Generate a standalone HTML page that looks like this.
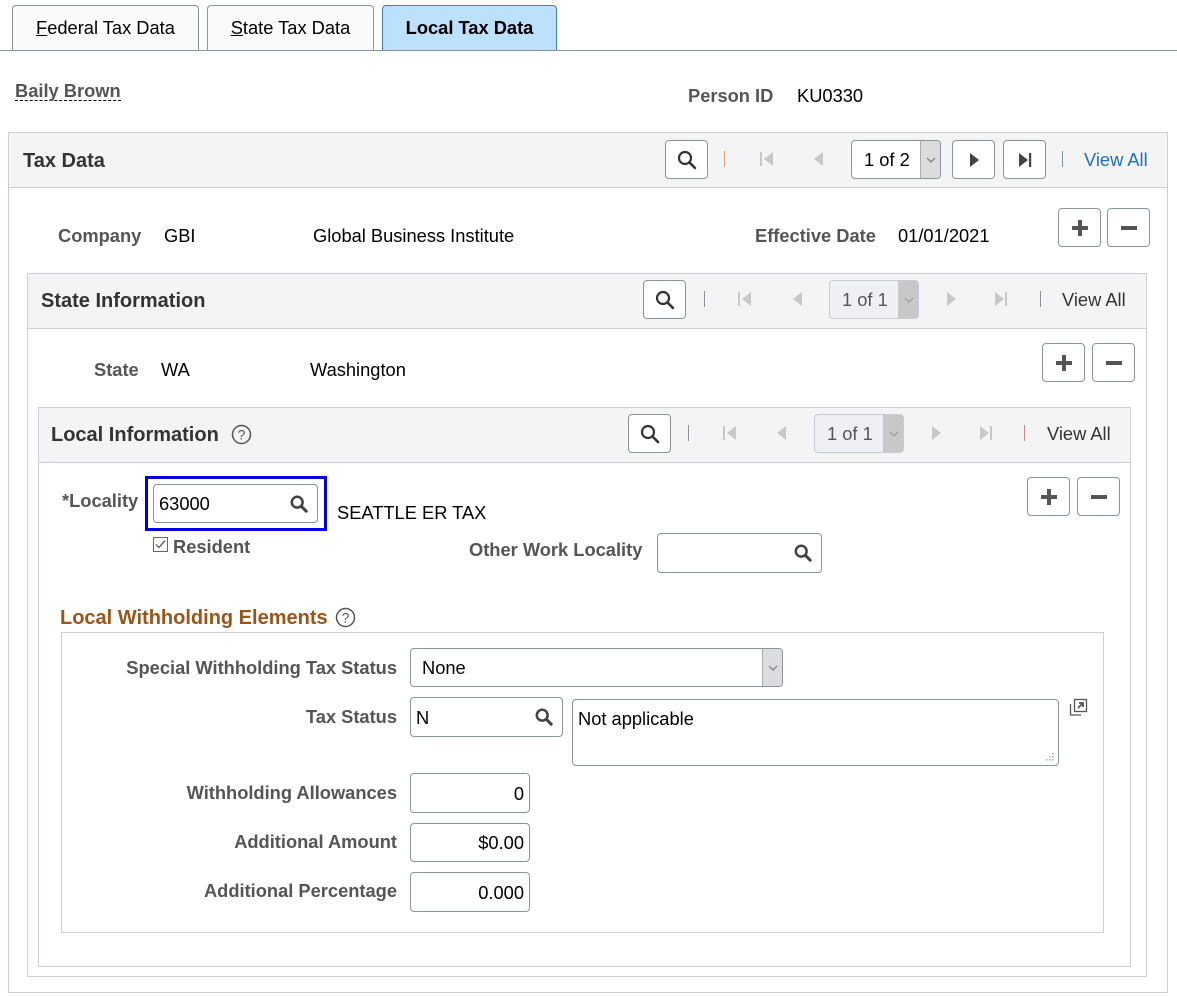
<!DOCTYPE html>
<html><head><meta charset="utf-8">
<style>
*{box-sizing:border-box;margin:0;padding:0}
body{width:1177px;height:997px;background:#fff;font-family:"Liberation Sans",Arial,sans-serif;font-size:18.3px;color:#000;position:relative;overflow:hidden}
.a{position:absolute}
.t{position:absolute;line-height:20px;white-space:nowrap}
.lb{position:absolute;line-height:20px;white-space:nowrap;font-weight:bold;color:#555}
.rl{text-align:right}
.tab{position:absolute;top:5px;height:46px;border:1px solid #8d9499;border-bottom:none;border-radius:4px 4px 0 0;background:#fafafa;text-align:center;line-height:44px;font-size:18.3px;color:#000}
.box{position:absolute;border:1px solid #ccd0d6;background:#fff}
.hdr{position:absolute;left:0;right:0;top:0;height:55px;background:#f4f4f4;border-bottom:1px solid #ccd0d6}
.ht{font-weight:bold;font-size:20px;color:#333}
.btn{position:absolute;width:43px;height:39px;border:1px solid #8d9499;border-radius:4px;background:#fff}
.btn svg{position:absolute;left:50%;top:50%;transform:translate(-50%,-50%)}
.sel{position:absolute;height:39px;border:1px solid #8d9499;border-radius:4px;background:#fff;overflow:hidden}
.sel .dd{position:absolute;right:0;top:0;bottom:0;width:20px;background:#dcdcdc;border-left:1px solid #aaa}
.sel.dis{background:#eef0f4;border-color:#c8ccd2;color:#555}
.sel.dis .dd{background:#c8c8c8;border-left-color:#c8c8c8}
.inp{position:absolute;border:1px solid #8d9499;border-radius:4px;background:#fff}
.pipe{position:absolute;width:1px;height:16px;background:#8d9499}
</style></head><body>

<div class="tab" style="left:12px;width:187px"><u>F</u>ederal Tax Data</div>
<div class="tab" style="left:207px;width:167px"><u>S</u>tate Tax Data</div>
<div class="tab" style="left:382px;width:175px;background:#bde0fb;border-color:#3b7fc4;font-weight:bold">Local Tax Data</div>
<div class="a" style="left:0;top:50px;width:1177px;height:1px;background:#8d9499"></div>

<div class="lb" style="left:15px;top:81px;border-bottom:1px dashed #000;line-height:19px">Baily Brown</div>
<div class="lb" style="left:688px;top:86px">Person ID</div>
<div class="t" style="left:797px;top:86px">KU0330</div>

<div class="box" style="left:8px;top:132px;width:1160px;height:861px">
  <div class="hdr"><div class="t ht" style="left:14px;top:18px">Tax Data</div></div>
</div>
<div class="btn" style="left:665px;top:140px"><svg width="20" height="20" viewBox="0 0 20 20"><circle cx="8" cy="8" r="6" fill="none" stroke="#333" stroke-width="2.2"/><path d="M12.5 12.5L18 18" stroke="#333" stroke-width="2.6" stroke-linecap="round"/></svg></div>
<div class="pipe" style="left:724px;top:151px;background:#d9a07a"></div>
<svg class="a" style="left:760px;top:151px" width="14" height="16"><rect x="0" y="1" width="2" height="14" fill="#c8c8c8"/><path d="M13 1L4 8L13 15Z" fill="#c8c8c8"/></svg>
<svg class="a" style="left:813px;top:151px" width="10" height="16"><path d="M10 1L1 8L10 15Z" fill="#c8c8c8"/></svg>
<div class="sel" style="left:851px;top:140px;width:90px"><div class="t" style="left:12px;top:9px">1 of 2</div><div class="dd"><svg class="a" style="left:5px;top:16px" width="10" height="6"><path d="M1 1L5 5L9 1" fill="none" stroke="#777" stroke-width="1.2"/></svg></div></div>
<div class="btn" style="left:952px;top:140px"><svg width="12" height="16"><path d="M2 1L11 8L2 15Z" fill="#444"/></svg></div>
<div class="btn" style="left:1003px;top:140px"><svg width="14" height="16"><path d="M1 1L10 8L1 15Z" fill="#444"/><rect x="11" y="1" width="2.2" height="14" fill="#444"/></svg></div>
<div class="pipe" style="left:1062px;top:151px"></div>
<div class="t" style="left:1084px;top:150px;color:#1b6dc9">View All</div>

<div class="lb" style="left:58px;top:226px">Company</div>
<div class="t" style="left:164px;top:226px">GBI</div>
<div class="t" style="left:313px;top:226px">Global Business Institute</div>
<div class="lb" style="left:755px;top:226px">Effective Date</div>
<div class="t" style="left:898px;top:226px">01/01/2021</div>
<div class="btn" style="left:1058px;top:208px"><svg width="20" height="20"><path d="M10 2V18M2 10H18" stroke="#555" stroke-width="4"/></svg></div>
<div class="btn" style="left:1107px;top:208px"><svg width="20" height="20"><path d="M2 10H18" stroke="#555" stroke-width="4"/></svg></div>

<div class="box" style="left:27px;top:273px;width:1120px;height:704px">
  <div class="hdr"><div class="t ht" style="left:13px;top:17px">State Information</div></div>
</div>
<div class="btn" style="left:643px;top:280px"><svg width="20" height="20" viewBox="0 0 20 20"><circle cx="8" cy="8" r="6" fill="none" stroke="#333" stroke-width="2.2"/><path d="M12.5 12.5L18 18" stroke="#333" stroke-width="2.6" stroke-linecap="round"/></svg></div>
<div class="pipe" style="left:704px;top:291px"></div>
<svg class="a" style="left:738px;top:291px" width="14" height="16"><rect x="0" y="1" width="2" height="14" fill="#c8c8c8"/><path d="M13 1L4 8L13 15Z" fill="#c8c8c8"/></svg>
<svg class="a" style="left:792px;top:291px" width="10" height="16"><path d="M10 1L1 8L10 15Z" fill="#c8c8c8"/></svg>
<div class="sel dis" style="left:829px;top:280px;width:90px"><div class="t" style="left:12px;top:9px">1 of 1</div><div class="dd"><svg class="a" style="left:5px;top:16px" width="10" height="6"><path d="M1 1L5 5L9 1" fill="none" stroke="#999" stroke-width="1.2"/></svg></div></div>
<svg class="a" style="left:946px;top:291px" width="10" height="16"><path d="M1 1L10 8L1 15Z" fill="#c8c8c8"/></svg>
<svg class="a" style="left:994px;top:291px" width="14" height="16"><path d="M1 1L10 8L1 15Z" fill="#c8c8c8"/><rect x="11" y="1" width="2" height="14" fill="#c8c8c8"/></svg>
<div class="pipe" style="left:1040px;top:291px"></div>
<div class="t" style="left:1062px;top:290px;color:#333">View All</div>

<div class="lb" style="left:94px;top:360px">State</div>
<div class="t" style="left:161px;top:360px">WA</div>
<div class="t" style="left:310px;top:360px">Washington</div>
<div class="btn" style="left:1042px;top:343px"><svg width="20" height="20"><path d="M10 2V18M2 10H18" stroke="#555" stroke-width="4"/></svg></div>
<div class="btn" style="left:1092px;top:343px"><svg width="20" height="20"><path d="M2 10H18" stroke="#555" stroke-width="4"/></svg></div>

<div class="box" style="left:38px;top:407px;width:1093px;height:560px">
  <div class="hdr"><div class="t ht" style="left:12px;top:17px">Local Information</div></div>
</div>
<svg class="a" style="left:231px;top:424px" width="21" height="21"><circle cx="10.5" cy="10.5" r="9" fill="none" stroke="#555" stroke-width="1.5"/><text x="10.5" y="15.5" text-anchor="middle" font-family="Liberation Sans" font-size="14" fill="#555">?</text></svg>
<div class="btn" style="left:628px;top:414px"><svg width="20" height="20" viewBox="0 0 20 20"><circle cx="8" cy="8" r="6" fill="none" stroke="#333" stroke-width="2.2"/><path d="M12.5 12.5L18 18" stroke="#333" stroke-width="2.6" stroke-linecap="round"/></svg></div>
<div class="pipe" style="left:688px;top:425px"></div>
<svg class="a" style="left:723px;top:425px" width="14" height="16"><rect x="0" y="1" width="2" height="14" fill="#c8c8c8"/><path d="M13 1L4 8L13 15Z" fill="#c8c8c8"/></svg>
<svg class="a" style="left:776px;top:425px" width="10" height="16"><path d="M10 1L1 8L10 15Z" fill="#c8c8c8"/></svg>
<div class="sel dis" style="left:814px;top:414px;width:90px"><div class="t" style="left:12px;top:9px">1 of 1</div><div class="dd"><svg class="a" style="left:5px;top:16px" width="10" height="6"><path d="M1 1L5 5L9 1" fill="none" stroke="#999" stroke-width="1.2"/></svg></div></div>
<svg class="a" style="left:931px;top:425px" width="10" height="16"><path d="M1 1L10 8L1 15Z" fill="#c8c8c8"/></svg>
<svg class="a" style="left:979px;top:425px" width="14" height="16"><path d="M1 1L10 8L1 15Z" fill="#c8c8c8"/><rect x="11" y="1" width="2" height="14" fill="#c8c8c8"/></svg>
<div class="pipe" style="left:1024px;top:425px;background:#c9868a"></div>
<div class="t" style="left:1047px;top:424px;color:#333">View All</div>

<div class="lb" style="left:62px;top:491px">*Locality</div>
<div class="a" style="left:145px;top:476px;width:182px;height:55px;border:3px solid #0000e6"></div>
<div class="inp" style="left:153px;top:484px;width:165px;height:39px"><div class="t" style="left:5px;top:9px">63000</div><svg class="a" style="left:136px;top:10px" width="18" height="18" viewBox="0 0 20 20"><circle cx="8" cy="8" r="6" fill="none" stroke="#444" stroke-width="2.8"/><path d="M12.5 12.5L18 18" stroke="#444" stroke-width="3.4" stroke-linecap="round"/></svg></div>
<div class="t" style="left:337px;top:503px">SEATTLE ER TAX</div>
<svg class="a" style="left:153px;top:537px" width="15" height="15"><rect x="0.5" y="0.5" width="14" height="14" fill="#fff" stroke="#666"/><path d="M3 7.5L6 10.5L12 3.5" fill="none" stroke="#666" stroke-width="1.4"/></svg>
<div class="lb" style="left:173px;top:537px">Resident</div>
<div class="lb" style="left:469px;top:540px">Other Work Locality</div>
<div class="inp" style="left:657px;top:533px;width:165px;height:40px"><svg class="a" style="left:136px;top:10px" width="18" height="18" viewBox="0 0 20 20"><circle cx="8" cy="8" r="6" fill="none" stroke="#444" stroke-width="2.8"/><path d="M12.5 12.5L18 18" stroke="#444" stroke-width="3.4" stroke-linecap="round"/></svg></div>
<div class="btn" style="left:1027px;top:477px"><svg width="20" height="20"><path d="M10 2V18M2 10H18" stroke="#555" stroke-width="4"/></svg></div>
<div class="btn" style="left:1077px;top:477px"><svg width="20" height="20"><path d="M2 10H18" stroke="#555" stroke-width="4"/></svg></div>

<div class="t" style="left:60px;top:608px;font-weight:bold;font-size:20px;color:#9c5418">Local Withholding Elements</div>
<svg class="a" style="left:335px;top:607px" width="21" height="21"><circle cx="10.5" cy="10.5" r="9" fill="none" stroke="#555" stroke-width="1.5"/><text x="10.5" y="15.5" text-anchor="middle" font-family="Liberation Sans" font-size="14" fill="#555">?</text></svg>

<div class="box" style="left:61px;top:632px;width:1043px;height:301px"></div>

<div class="lb rl" style="left:96px;width:301px;top:658px">Special Withholding Tax Status</div>
<div class="sel" style="left:410px;top:648px;width:373px"><div class="t" style="left:11px;top:9px">None</div><div class="dd"><svg class="a" style="left:5px;top:16px" width="10" height="6"><path d="M1 1L5 5L9 1" fill="none" stroke="#777" stroke-width="1.2"/></svg></div></div>

<div class="lb rl" style="left:96px;width:301px;top:707px">Tax Status</div>
<div class="inp" style="left:410px;top:697px;width:153px;height:40px"><div class="t" style="left:5px;top:10px">N</div><svg class="a" style="left:124px;top:10px" width="18" height="18" viewBox="0 0 20 20"><circle cx="8" cy="8" r="6" fill="none" stroke="#444" stroke-width="2.8"/><path d="M12.5 12.5L18 18" stroke="#444" stroke-width="3.4" stroke-linecap="round"/></svg></div>
<div class="inp" style="left:572px;top:699px;width:487px;height:67px"><div class="t" style="left:5px;top:9px">Not applicable</div><svg class="a" style="left:472px;top:52px" width="10" height="10"><g fill="#aaa"><rect x="7" y="1" width="1.5" height="1.5"/><rect x="4" y="4" width="1.5" height="1.5"/><rect x="7" y="4" width="1.5" height="1.5"/><rect x="1" y="7" width="1.5" height="1.5"/><rect x="4" y="7" width="1.5" height="1.5"/><rect x="7" y="7" width="1.5" height="1.5"/></g></svg></div>
<svg class="a" style="left:1068px;top:697px" width="20" height="20"><path d="M2.5 7V18H13" fill="none" stroke="#555" stroke-width="1.3"/><rect x="6.5" y="2.5" width="12" height="12" fill="#fff" stroke="#555" stroke-width="1.3"/><path d="M10 11L15 6M11 6H15V10" fill="none" stroke="#555" stroke-width="1.8"/></svg>

<div class="lb rl" style="left:96px;width:301px;top:783px">Withholding Allowances</div>
<div class="inp" style="left:410px;top:773px;width:120px;height:40px"><div class="t" style="right:5px;top:10px">0</div></div>
<div class="lb rl" style="left:96px;width:301px;top:832px">Additional Amount</div>
<div class="inp" style="left:410px;top:823px;width:120px;height:39px"><div class="t" style="right:5px;top:9px">$0.00</div></div>
<div class="lb rl" style="left:96px;width:301px;top:881px">Additional Percentage</div>
<div class="inp" style="left:410px;top:872px;width:120px;height:40px"><div class="t" style="right:5px;top:10px">0.000</div></div>

</body></html>
